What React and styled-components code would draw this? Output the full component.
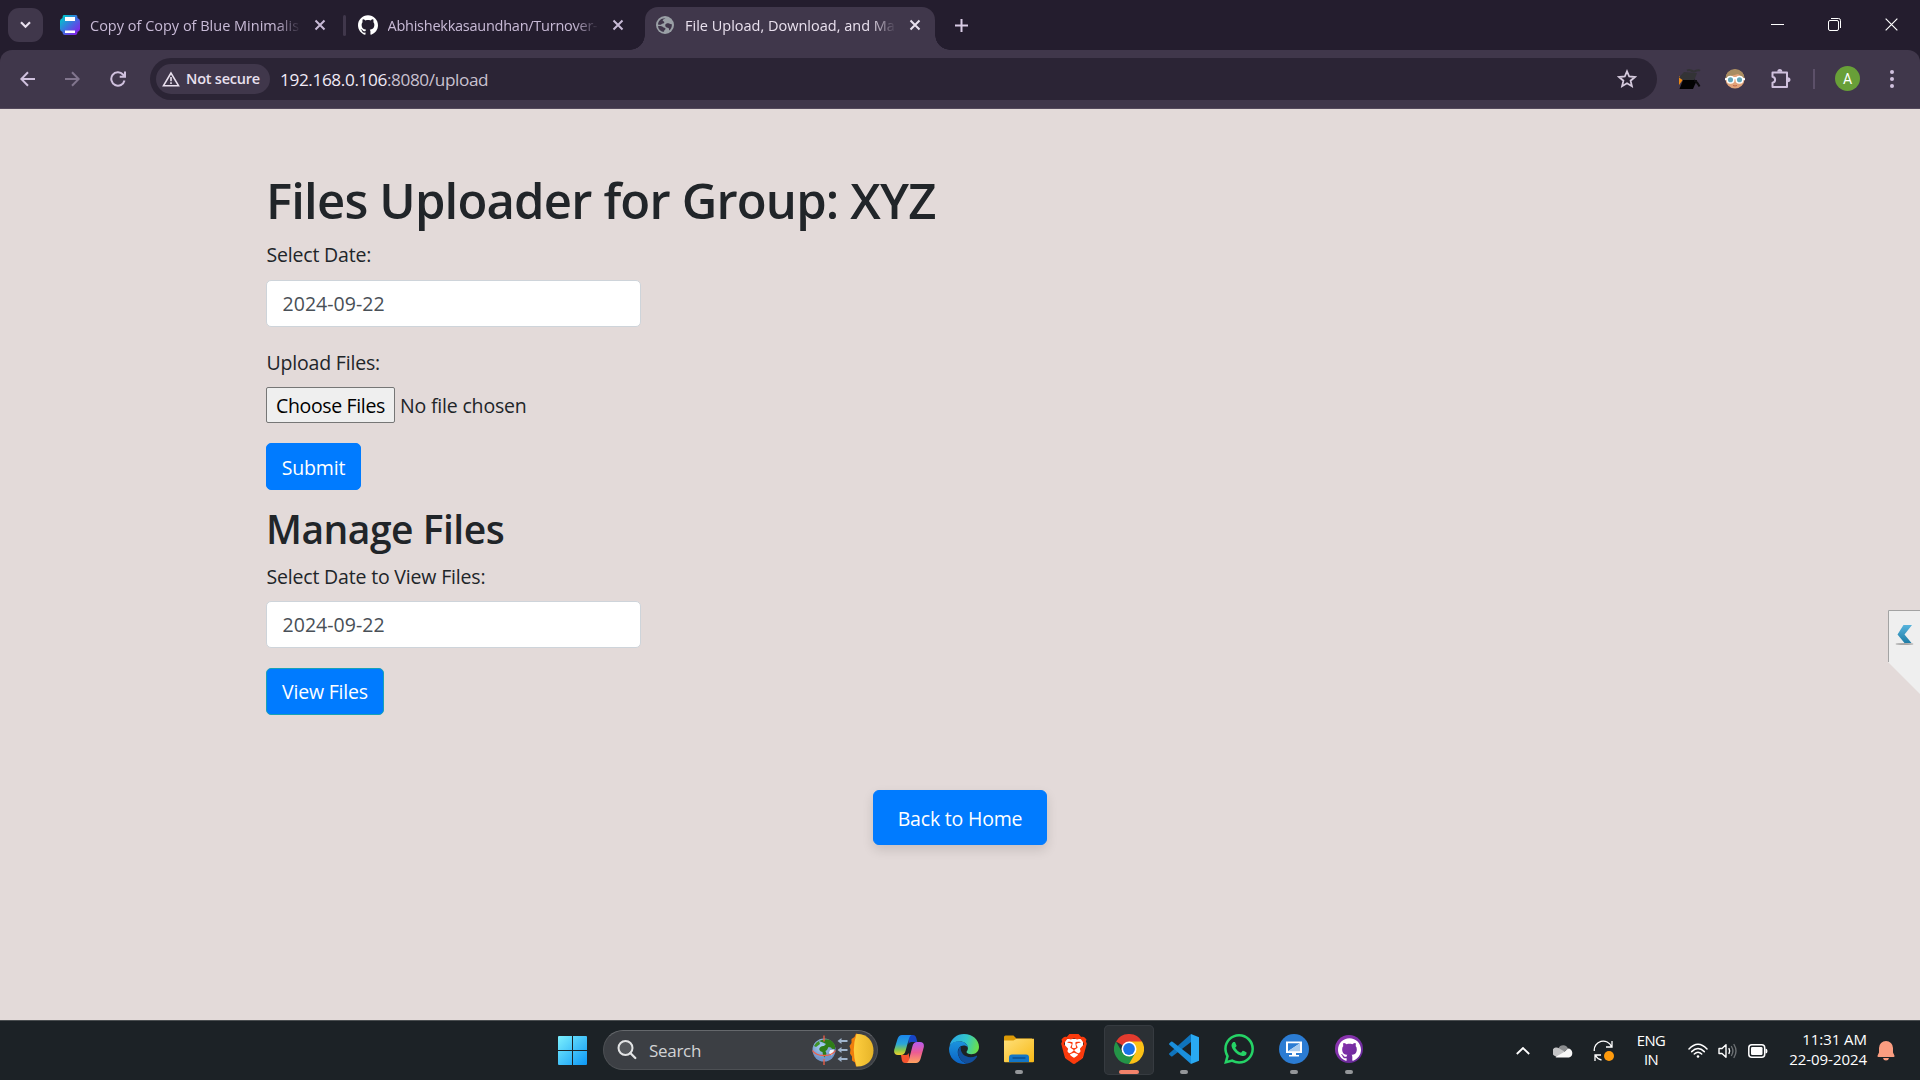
import React from "react";
import styled, { createGlobalStyle } from "styled-components";
import { SiBrave, SiGithub, SiWhatsapp } from "react-icons/si";

const GlobalStyle = createGlobalStyle`
  *, *::before, *::after { box-sizing: border-box; }
  body { margin: 0; overflow: hidden; font-family: "Open Sans", "Noto Sans", sans-serif; }
  button, input { font-family: inherit; }
  svg { display: block; flex: none; }
`;

const Screen = styled.div`
  display: flex;
  flex-direction: column;
  width: 1920px;
  height: 1080px;
  overflow: hidden;
  background: #241d2e;
`;

/* ---------- tab strip ---------- */
const TabStrip = styled.div`
  display: flex;
  align-items: flex-start;
  height: 50px;
  background: #241d2e;
`;
const TabSearch = styled.button`
  display: grid;
  place-items: center;
  width: 35px;
  height: 34px;
  margin: 8px 17px 0 8px;
  padding: 0;
  border: 0;
  border-radius: 11px;
  background: #40374b;
`;
const Tab = styled.div`
  position: relative;
  display: flex;
  align-items: center;
  width: ${(p) => p.$width}px;
  height: 43px;
  margin-top: 7px;
  padding-left: ${(p) => (p.$active ? 11 : 0)}px;
  border-radius: 13px 13px 0 0;
  background: ${(p) => (p.$active ? "#40374b" : "transparent")};
  color: ${(p) => (p.$active ? "#e9e0ee" : "#c8bad6")};
  &::before, &::after {
    content: "";
    display: ${(p) => (p.$active ? "block" : "none")};
    position: absolute;
    bottom: 0;
    width: 15px;
    height: 15px;
  }
  &::before { left: -15px; background: radial-gradient(circle at 0 0, transparent 14.5px, #40374b 15px); }
  &::after { right: -15px; background: radial-gradient(circle at 100% 0, transparent 14.5px, #40374b 15px); }
`;
const Favicon = styled.span`
  display: grid;
  place-items: center start;
  width: ${(p) => p.$width}px;
  margin-top: -7px;
  color: #fff;
`;
const TabTitle = styled.span`
  width: 211px;
  margin-top: -5px;
  overflow: hidden;
  white-space: nowrap;
  font-size: 14.5px;
  line-height: 26px;
  letter-spacing: ${(p) => p.$spacing || 0}px;
  mask-image: linear-gradient(90deg, #000 186px, transparent 211px);
`;
const TabClose = styled.button`
  display: grid;
  place-items: center;
  width: 20px;
  height: 20px;
  margin: -7px 0 0 ${(p) => p.$gap}px;
  padding: 0;
  border: 0;
  background: none;
  color: inherit;
`;
const TabDivider = styled.span`
  width: 3px;
  height: 21px;
  margin: 15px 12px 0 0;
  border-radius: 2px;
  background: #40374b;
`;
const NewTab = styled.button`
  display: grid;
  place-items: center;
  width: 36px;
  height: 36px;
  margin: 7px auto 0 8px;
  padding: 0;
  border: 0;
  background: none;
`;
const WindowControls = styled.div`
  display: flex;
  height: 50px;
`;
const WindowButton = styled.button`
  display: grid;
  place-items: center;
  width: 57px;
  height: 49px;
  padding: 0;
  border: 0;
  background: none;
`;

/* ---------- toolbar ---------- */
const Toolbar = styled.div`
  display: flex;
  align-items: center;
  height: 59px;
  padding: 0 10px 1px;
  border-bottom: 1px solid #54495c;
  border-radius: 12px 12px 0 0;
  background: #40374b;
`;
const ToolButton = styled.button`
  display: grid;
  place-items: center;
  width: ${(p) => p.$width || 36}px;
  height: 36px;
  margin-right: ${(p) => p.$gap || 0}px;
  padding: 0;
  border: 0;
  background: none;
  opacity: ${(p) => (p.$dim ? 0.45 : 1)};
`;
const Omnibox = styled.div`
  display: flex;
  align-items: center;
  width: 1507px;
  height: 42px;
  margin-right: 22px;
  padding: 0 12px 0 6px;
  border-radius: 21px;
  background: #2b2435;
`;
const SecurityChip = styled.div`
  display: flex;
  align-items: center;
  gap: 6px;
  width: 114px;
  height: 30px;
  margin-right: 10px;
  padding-left: 6px;
  border-radius: 15px;
  background: #40374b;
  color: #e9e0ee;
  font-size: 14.5px;
  font-weight: 600;
  letter-spacing: -0.22px;
  white-space: nowrap;
`;
const Url = styled.span`
  flex: 1;
  padding-top: 1px;
  color: #c9c1d0;
  font-size: 17.2px;
  letter-spacing: -0.38px;
  b { color: #f1eaf5; font-weight: 400; }
`;
const ToolDivider = styled.span`
  width: 2px;
  height: 20px;
  margin: 0 20px 0 21px;
  background: #5c5069;
`;
const Avatar = styled.span`
  display: grid;
  place-items: center;
  width: 25px;
  height: 25px;
  margin-right: 26px;
  border-radius: 50%;
  background: #689f38;
  color: #fff;
  font: 400 14px Roboto, sans-serif;
`;

/* ---------- web page ---------- */
const Page = styled.main`
  position: relative;
  height: 911px;
  padding: 60.5px 266px 0;
  background: #e3dad9;
  color: #212529;
  font-size: 19.5px;
  line-height: 30px;
  letter-spacing: -0.18px;
`;
const Title = styled.h1`
  margin: 0 0 10px;
  font-size: 49px;
  line-height: 60px;
  font-weight: 600;
  letter-spacing: -0.82px;
`;
const Subtitle = styled.h2`
  margin: 13px 0 9px;
  padding-top: 2px;
  font-size: 39px;
  line-height: 47px;
  font-weight: 600;
  letter-spacing: -0.5px;
`;
const Group = styled.div`
  display: flex;
  flex-direction: column;
  align-items: flex-start;
  gap: 10px;
  margin-bottom: 20px;
`;
const Label = styled.label`
  display: block;
  height: 30px;
  padding: ${(p) => p.$drop || 0}px 0 0 0.5px;
`;
const DateInput = styled.input`
  width: 375px;
  height: ${(p) => p.$height || 47.5}px;
  padding: 0 15px 0 15.5px;
  border: 1px solid #ced4da;
  border-radius: 5px;
  background: #fff;
  color: #495057;
  font-size: 19.5px;
  letter-spacing: 0.04px;
  outline: 0;
`;
const FilePicker = styled.div`
  display: flex;
  align-items: center;
  gap: 5px;
  height: 36px;
  span { padding-top: 2px; }
`;
const ChooseButton = styled.button`
  width: 129px;
  height: 36px;
  padding: 1px 0 0;
  border: 1px solid #767676;
  border-radius: 2px;
  background: #efefef;
  color: #000;
  font-size: 19.5px;
  letter-spacing: -0.35px;
`;
const Button = styled.button`
  display: block;
  width: ${(p) => p.$width}px;
  height: 47px;
  padding: 1px 0 0;
  border: 1px solid ${(p) => p.$edge || "#007bff"};
  border-radius: 5px;
  background: #007bff;
  color: #fff;
  font-size: 19.5px;
  letter-spacing: -0.2px;
`;
const HomeRow = styled.div`
  display: flex;
  justify-content: center;
  margin-top: 75px;
`;
const HomeButton = styled(Button)`
  height: 55px;
  padding-top: 2px;
  border-radius: 6px;
  box-shadow: 0 5px 12px rgba(0, 0, 0, 0.12);
`;
const SideHandle = styled.div`
  position: absolute;
  top: 501px;
  right: 0;
`;

/* ---------- taskbar ---------- */
const Taskbar = styled.footer`
  display: flex;
  align-items: center;
  height: 60px;
  padding-left: 558px;
  border-top: 1px solid #4a4e50;
  background: #1c2226;
  color: #fff;
`;
const SearchBox = styled.div`
  display: flex;
  align-items: center;
  width: 275px;
  height: 40px;
  margin: -1px 6px 0 16px;
  padding: 0 3px 0 14px;
  border: 1px solid #4d5054;
  border-top-color: #65686c;
  border-radius: 20px;
  background: #3c3f44;
  color: #d2d3d5;
  font-size: 17px;
  letter-spacing: -0.3px;
  svg:first-child { margin-left: -1px; }
  span { flex: 1; margin-left: 12px; }
`;
const Apps = styled.div`
  display: flex;
  gap: 5px;
  margin-top: -1px;
`;
const AppTile = styled.div`
  display: grid;
  grid-template-rows: 48px 4px;
  justify-items: center;
  align-items: center;
  width: 50px;
  height: 50px;
  box-shadow: inset 0 0 0 1px ${(p) => (p.$active ? "#363b40" : "transparent")};
  border-radius: 5px;
  background: ${(p) => (p.$active ? "#2b3034" : "transparent")};
`;
const Running = styled.span`
  width: ${(p) => (p.$active ? 20 : 8)}px;
  height: 4px;
  margin-top: -6px;
  border-radius: 2px;
  background: ${(p) => (p.$active ? "#f2836b" : "#94979a")};
`;
const BraveTint = styled.span`
  color: #fb3a0c;
  position: relative;
  svg { position: relative; }
  &::before {
    content: "";
    position: absolute;
    inset: 5px 6px 6px;
    background: #fff;
  }
`;
const GithubDisc = styled.span`
  display: grid;
  place-items: center;
  width: 28px;
  height: 28px;
  border-radius: 50%;
  background: linear-gradient(135deg, #9436b4, #5f2795);
  color: #fff;
`;
const Tray = styled.div`
  display: flex;
  align-items: center;
  flex: 1;
  padding-left: 139px;
  font-size: 15px;
  line-height: 20px;
`;
const TrayIcon = styled.span`
  display: grid;
  place-items: center;
  width: ${(p) => p.$width}px;
  height: 40px;
`;
const Language = styled.div`
  width: 72px;
  margin-top: -1px;
  text-align: center;
  font-size: 14.8px;
  line-height: 19.5px;
  letter-spacing: -0.55px;
`;
const Clock = styled.div`
  width: 98px;
  margin-top: -4px;
  text-align: right;
  letter-spacing: -0.05px;
`;

/* ---------- drawings ---------- */
const stroke = (color, width) => ({ fill: "none", stroke: color, strokeWidth: width });

const Cross = ({ size = 10, color = "currentColor", width = 2 }) => (
  <svg width={size} height={size} viewBox="0 0 10 10" overflow="visible" {...stroke(color, width)}>
    <path d="M.5.5l9 9M9.5.5l-9 9" />
  </svg>
);
const CanvaPrinter = () => (
  <svg width="20" height="20" viewBox="0 0 20 20">
    <defs>
      <linearGradient id="printer" x1="0" y1="0" x2="1" y2="1">
        <stop offset=".1" stopColor="#00c4cc" /><stop offset=".5" stopColor="#3f6fe0" /><stop offset=".85" stopColor="#7d2ae8" />
      </linearGradient>
    </defs>
    <path d="M4 0h12q1.500 0 1.500 3Q20 4 20 6v8q0 2-2.500 3 0 3-2.500 3H5q-2.500 0-2.500-3Q0 16 0 14V6q0-2 2.500-3Q2.500 0 4 0Z" fill="url(#printer)" />
    <path d="M5 2h10v4H5zM5 15.500h10v2.500H5z" fill="#fff" />
  </svg>
);
const Globe = () => (
  <svg width="18" height="18" viewBox="0 0 18 18">
    <circle cx="9" cy="9" r="9" fill="#9aa0a6" />
    <path d="M9.500 2.200c-1 1-2.800.8-2.800 2.400 0 1 1.800.6 1.600 1.900-.2 1.200-2 1-2.800 1.800-1 .8-2.200.6-3.500.3C2 5 5 2 9.500 2.200ZM2 10.200c1.600-.2 4-.2 4.900.8.800 1 2.600.3 2.600 1.800 0 1.300-1.500 1-1.500 3C4.800 15.800 2.300 13.200 2 10.200ZM9.200 9.200c0-1.700 2-2 3.300-1.900 1.200.1 1.300 1 3.400.9.200 3-1 5-2.900 6.300.2-1.700-.1-2.400-1.300-2.700-1.400-.3-2.500-1.200-2.500-2.600Z" fill="#40374b" />
  </svg>
);
const Arrow = ({ flip }) => (
  <svg width="16" height="16" viewBox="0 0 16 16" transform={flip ? "scale(-1 1)" : undefined} {...stroke("#d0c1de", 2)}>
    <path d="M15 8H1.500M8 1.200L1.300 8 8 14.800" />
  </svg>
);
const Reload = () => (
  <svg width="16" height="16" viewBox="0 0 16 16" {...stroke("#d0c1de", 2)}>
    <path d="M14.500 9.500A6.700 6.700 0 1 1 13 3.500L14.500 5M15 .5v5.300H9.700" />
  </svg>
);
const Warning = () => (
  <svg width="18" height="16" viewBox="0 0 18 16" {...stroke("#e9e0ee", 1.6)}>
    <path d="M9 2L1.500 14.700h15zM9 6v4.300M9 11.300v1.600" />
  </svg>
);
const Star = () => (
  <svg width="20" height="20" viewBox="0 0 20 20" {...stroke("#d5cadd", 1.8)}>
    <path d="M10 2.300l2.200 5.200 5.700.5-4.300 3.700 1.300 5.500L10 14.300l-4.900 2.900 1.300-5.500L2.100 8l5.700-.5z" />
  </svg>
);
const GradCap = () => (
  <svg width="22" height="22" viewBox="0 0 22 22">
    <path d="M0 8l4 3.500L0 17z" fill="#f08a12" />
    <path d="M5 4L18 5l-3 8H5L0 9.500z" fill="#333336" />
    <path d="M4 12h14l-4 9H.500z" fill="#020202" />
    <path d="M8 2.500c4-2 5 2 8 .7s4-1.200 5-.4" {...stroke("#333336", 2)} />
    <path d="M15 12.500c3 .5 4 3.500 5.500 6" {...stroke("#0d0c0e", 2)} />
  </svg>
);
const GogglesFace = () => (
  <svg width="20" height="20" viewBox="0 0 20 20">
    <circle cx="10" cy="10" r="9.500" fill="#e3a47a" />
    <path d="M.5 9.500a9.500 9.500 0 0 1 19 0L13 5 6 7z" fill="#a98d62" />
    <path d="M0 9.300q10-2.500 20 0v2q-10-2-20 0z" fill="#fff" />
    <circle cx="5.500" cy="10.800" r="3.300" fill="#63a6b9" stroke="#fff" strokeWidth="1.500" />
    <circle cx="14.500" cy="10.800" r="3.300" fill="#63a6b9" stroke="#fff" strokeWidth="1.500" />
    <path d="M8 16.500q2 1 4 0" {...stroke("#c26548", 1)} />
  </svg>
);
const Puzzle = () => (
  <svg width="22" height="22" viewBox="0 0 22 22">
    <path d="M2.500 4.500h14.500v14.500H2.500v-4.200q2.600-.4 2.600-3T2.500 8.800z" {...stroke("#d0c1de", 2)} strokeLinejoin="round" />
    <path d="M7.300 3.800a2.500 2.800 0 0 1 5 0zM17.700 9.200a2.800 2.500 0 0 1 0 5z" fill="#d0c1de" />
  </svg>
);
const Dots = () => (
  <svg width="4" height="18" viewBox="0 0 4 18" fill="#d0c1de">
    <circle cx="2" cy="2" r="2" /><circle cx="2" cy="9" r="2" /><circle cx="2" cy="16" r="2" />
  </svg>
);
const Handle = () => (
  <svg width="32" height="84" viewBox="0 0 32 84">
    <defs>
      <linearGradient id="chev" x1="0" y1="0" x2="0" y2="1"><stop stopColor="#57b3dc" /><stop offset="1" stopColor="#1f7da6" /></linearGradient>
    </defs>
    <path d="M0 0h32v84L0 52z" fill="#efefef" />
    <path d="M.5 52V.5H32" {...stroke("#a3a3a3", 1)} />
    <path d="M15.500 15H24l-7.500 9.500L23.500 33h-7L9.500 24.500z" fill="url(#chev)" />
    <ellipse cx="16.500" cy="34" rx="9" ry="1" fill="#a8a8a8" />
  </svg>
);
const WindowsLogo = () => (
  <svg width="29" height="29" viewBox="0 0 29 29">
    <defs>
      <linearGradient id="win" x1="0" y1="0" x2="29" y2="29" gradientUnits="userSpaceOnUse"><stop stopColor="#7cf0fd" /><stop offset="1" stopColor="#0c97f5" /></linearGradient>
    </defs>
    <path d="M1 0h13v14H0V1q0-1 1-1zM15 0h13q1 0 1 1v13H15zM0 15h14v14H1q-1 0-1-1zM15 15h14v13q0 1-1 1H15z" fill="url(#win)" />
  </svg>
);
const Lens = () => (
  <svg width="20" height="20" viewBox="0 0 20 20">
    <circle cx="8.500" cy="8" r="7" fill="#55585c" stroke="#e3e4e5" strokeWidth="2" />
    <path d="M13.300 13l5 5" stroke="#e3e4e5" strokeWidth="2.300" strokeLinecap="round" />
  </svg>
);
const Equinox = () => (
  <svg width="64" height="34" viewBox="0 0 64 34">
    <defs>
      <radialGradient id="sea" cx=".4" cy=".35"><stop stopColor="#a9d4f5" /><stop offset="1" stopColor="#7395c9" /></radialGradient>
      <linearGradient id="sun"><stop stopColor="#ffcf3f" /><stop offset="1" stopColor="#e6b429" /></linearGradient>
    </defs>
    <circle cx="14" cy="17" r="11.500" fill="url(#sea)" />
    <path d="M9 8q7-3 12-.5 5 4 4 8.500-3 1-4-1.500l-2.500-.5q-1 3-3 4l1 3-2 3.500q-2-2-2-5.500-4-1-3-4 1.500-2.500 4.500-2l2-2-3-1.500z" fill="#2f7d18" />
    <path d="M4 13q2-4 5-5l1 3-4 3z" fill="#3f9328" />
    <path d="M20 17l4-.5q0 4-2.500 6L19 20z" fill="#f0f6fb" />
    <path d="M2.500 17.500q3 5 11.500 5t11.500-5M14 2.500v6M14 26v6" {...stroke("#ee5f48", 1.300)} />
    <g fill="#9fb4cd">
      <path d="M27.500 8l4-3v2h6v2h-6v2zM27.500 17l4-3v2h6v2h-6v2zM27.500 26l4-3v2h6v2h-6v2z" />
    </g>
    <path d="M46 .5l4 1v31l-4 1-1-4-3-2v-4l-2-3 .500-4L39.500 13l2-3V6l3-2z" fill="#ef7d0c" />
    <path d="M46.500 1C57 .5 63.500 8 63.500 17.500S57 34 46.500 33.500Q41 17 46.500 1z" fill="url(#sun)" />
  </svg>
);
const Copilot = () => (
  <svg width="30" height="28" viewBox="0 0 30 28">
    <defs>
      <linearGradient id="cpA" x1="0" y1="0" x2="0" y2="1"><stop stopColor="#1a86ee" /><stop offset=".45" stopColor="#2ba6d8" /><stop offset=".75" stopColor="#86c84c" /><stop offset="1" stopColor="#f2cf2c" /></linearGradient>
      <linearGradient id="cpB" x1="0" y1="0" x2="0" y2="1"><stop stopColor="#b65af0" /><stop offset=".5" stopColor="#ec5c93" /><stop offset="1" stopColor="#ffa35e" /></linearGradient>
    </defs>
    <path d="M14 0h5q2.500 0 3.300 3l1 4h-6q-2 0-2.700 2z" fill="#1745c4" />
    <path d="M16 28h-5q-2.500 0-3.200-3L7 20h5q2 0 2.700-2z" fill="#f4532e" />
    <path d="M8 0h10q-2 0-3 3.500L11.500 16Q10.500 20 7 20H4Q-.8 20 .3 14.500L3.500 4Q4.800 0 8 0z" fill="url(#cpA)" />
    <path d="M22 28H12q2 0 3-3.500L18.500 11Q19.500 7 23 7h3q4.800 0 3.700 5.500L26.500 24Q25.200 28 22 28z" fill="url(#cpB)" />
  </svg>
);
const Edge = () => (
  <svg width="30" height="30" viewBox="0 0 30 30">
    <defs>
      <linearGradient id="edA" x1="0" y1=".3" x2="1" y2=".5"><stop stopColor="#2aa5e8" /><stop offset=".55" stopColor="#32c6c9" /><stop offset="1" stopColor="#6be04a" /></linearGradient>
      <linearGradient id="edB" x1="0" y1="0" x2="0" y2="1"><stop stopColor="#1b93dd" /><stop offset="1" stopColor="#0b62c4" /></linearGradient>
    </defs>
    <path d="M.5 12C2 4.500 8 0 15 0c8.500 0 15 6 15 12.700 0 4.800-3.500 7.500-7.500 7.500-3.200 0-5-1.200-5-2.200 0-.8 1.400-1.400 1.400-3.800C18.900 10 15 7.500 11 7.500 6 7.500 2 9.500.5 12z" fill="url(#edA)" />
    <path d="M0 15C.3 9.500 5 7.300 10 7.300c5 0 8.700 3 8.900 6.200-1-1.400-2.500-2-4.300-2-4 0-6.600 4-5.600 8.500 1 5 5 9 9.500 9.500C9 32 0 25 0 15z" fill="url(#edB)" />
    <path d="M11.800 12.300C6 17 10 28 18.500 29.600 23.500 28.700 26.500 25.500 28 22.800c.5-.9-.2-1.300-1-.9-8 3.600-16.500-1-15.200-9.600z" fill="#124f9c" />
  </svg>
);
const Folder = () => (
  <svg width="30" height="28" viewBox="0 0 30 28">
    <defs>
      <linearGradient id="fold" x1="0" y1="0" x2="1" y2="1"><stop stopColor="#ffe07a" /><stop offset="1" stopColor="#f7b916" /></linearGradient>
    </defs>
    <path d="M0 2q0-1.500 1.500-1.500h8l3 3H28v5H0z" fill="#dc9a06" />
    <path d="M0 5.500h9.500l3-1.800H30v22.500q0 1-1 1H1q-1 0-1-1z" fill="url(#fold)" />
    <path d="M5 27v-4.500q0-3 3-3h14q3 0 3 3V27z" fill="#1376c6" />
    <path d="M9 23h12" stroke="#0b4f90" strokeWidth="1.300" strokeLinecap="round" />
  </svg>
);
const Chrome = () => (
  <svg width="30" height="30" viewBox="0 0 30 30">
    <path d="M15 15L2 7.500A15 15 0 0 1 28 7.500z" fill="#e33b2e" />
    <path d="M15 15V7.500H28A15 15 0 0 1 15 30z" fill="#fbc116" />
    <path d="M2 7.500L8.500 18.750 15 22.500l6.500-3.750L15 30A15 15 0 0 1 2 7.500z" fill="#249447" />
    <circle cx="15" cy="15" r="7.500" fill="#fff" />
    <circle cx="15" cy="15" r="5.900" fill="#1a73e8" />
  </svg>
);
const VsCode = () => (
  <svg width="30" height="30" viewBox="0 0 30 30">
    <path d="M22 0l8 3.200v23.600L22 30z" fill="#29a9f2" />
    <path d="M22 0v8L3.500 22.300q-.8.600-1.500 0L.4 20.700q-.7-.8 0-1.500z" fill="#0f74bd" />
    <path d="M22 30v-8L3.500 7.700q-.8-.6-1.500 0L.4 9.300q-.7.8 0 1.500z" fill="#1a8fdc" />
  </svg>
);
const RemoteDesktop = () => (
  <svg width="30" height="30" viewBox="0 0 30 30">
    <circle cx="15" cy="15" r="15" fill="#2b7cd3" />
    <path d="M7 7.500h16v11.500H7z" fill="#fff" />
    <path d="M9 9.300h12L9 17.300z" fill="#2b7cd3" />
    <path d="M21 9.300v8H9z" fill="#a8cbee" />
    <path d="M13 19h4v2h3v1.600H10V21h3z" fill="#fff" />
  </svg>
);
const Cloud = () => (
  <svg width="20" height="14" viewBox="0 0 20 14">
    <path d="M5.500 4.500A5 5 0 0 1 15 4.800L9 9z" fill="#8b8d8f" />
    <path d="M1 11.500A4.300 4.300 0 0 1 6 4.200l7 4.300L4 13z" fill="#c3c4c5" />
    <path d="M2.500 13l9-5.200 3.500-3.300A4.600 4.600 0 0 1 16 13.500H4.200q-1 0-1.700-.5z" fill="#f7f7f7" />
  </svg>
);
const Update = () => (
  <svg width="22" height="22" viewBox="0 0 22 22">
    <path d="M1.300 11A9 9 0 0 1 18.500 6.500M19 1v6h-6M8.500 20A9 9 0 0 1 2.500 15.500M8 15H2v6" {...stroke("#fff", 1.300)} />
    <circle cx="16" cy="16" r="5" fill="#ff9b0d" />
  </svg>
);
const Wifi = () => (
  <svg width="20" height="16" viewBox="0 0 20 16" {...stroke("#fff", 1.500)} strokeLinecap="round">
    <path d="M1 6q9-9.500 18 0M3.700 8.600q6.300-6.400 12.600 0M6.300 11q3.700-3.600 7.400 0" />
    <circle cx="10" cy="13.500" r="1.300" fill="#fff" stroke="none" />
  </svg>
);
const Speaker = () => (
  <svg width="20" height="16" viewBox="0 0 20 16" {...stroke("#fff", 1.400)} strokeLinejoin="round" strokeLinecap="round">
    <path d="M1 5.500h3L8 1.800v12.400L4 10.500H1z" />
    <path d="M11 5.500q1.300 2.500 0 5" />
    <path d="M13.500 3.500q2.800 4.500 0 9M16 1.500q4 6.500 0 13" stroke="#6d7174" />
  </svg>
);
const Battery = () => (
  <svg width="20" height="14" viewBox="0 0 20 14">
    <rect x=".8" y=".8" width="15.900" height="12.400" rx="3" {...stroke("#fff", 1.500)} />
    <rect x="3" y="3" width="11.500" height="8" rx="1.200" fill="#fff" />
    <path d="M17.500 4.500q2 0 2 2.500t-2 2.500z" fill="#fff" />
  </svg>
);
const Bell = () => (
  <svg width="18" height="20" viewBox="0 0 18 20" fill="#fa9d80">
    <path d="M9 0a7 7 0 0 1 7 7v4.500l1.500 3.300q.3 1.200-1 1.200h-15q-1.300 0-1-1.200L2 11.500V7a7 7 0 0 1 7-7zM6 17h6q-.5 2.500-3 2.500T6 17z" />
  </svg>
);

const apps = [
  { id: "copilot", icon: <Copilot /> },
  { id: "edge", icon: <Edge /> },
  { id: "files", icon: <Folder />, running: true },
  { id: "brave", icon: <BraveTint><SiBrave size={30} /></BraveTint> },
  { id: "chrome", icon: <Chrome />, running: true, active: true },
  { id: "code", icon: <VsCode />, running: true },
  { id: "whatsapp", icon: <SiWhatsapp size={30} color="#25d366" /> },
  { id: "remote", icon: <RemoteDesktop />, running: true },
  { id: "github", icon: <GithubDisc><SiGithub size={23} /></GithubDisc>, running: true },
];

export default function App() {
  return (
    <Screen>
      <GlobalStyle />
      <TabStrip>
        <TabSearch>
          <svg width="11" height="8" viewBox="0 0 11 8" {...stroke("#e9e0ee", 2.2)}><path d="M1 1.300l4.500 4.500L10 1.300" /></svg>
        </TabSearch>
        <Tab $width={283}>
          <Favicon $width={30}><CanvaPrinter /></Favicon>
          <TabTitle>Copy of Copy of Blue Minimalis</TabTitle>
          <TabClose $gap={9}><Cross /></TabClose>
        </Tab>
        <TabDivider />
        <Tab $width={287}>
          <Favicon $width={29.5}><SiGithub size={20} /></Favicon>
          <TabTitle $spacing={-0.25}>Abhishekkasaundhan/Turnover-</TabTitle>
          <TabClose $gap={9}><Cross /></TabClose>
        </Tab>
        <Tab $width={290} $active>
          <Favicon $width={29}><Globe /></Favicon>
          <TabTitle>File Upload, Download, and Ma</TabTitle>
          <TabClose $gap={9}><Cross /></TabClose>
        </Tab>
        <NewTab>
          <svg width="13" height="13" viewBox="0 0 13 13" {...stroke("#d9cce5", 2)}><path d="M6.500 0v13M0 6.500h13" /></svg>
        </NewTab>
        <WindowControls>
          <WindowButton><svg width="13" height="13" viewBox="0 0 13 13" {...stroke("#fff", 1)}><path d="M0 6.500h13" /></svg></WindowButton>
          <WindowButton>
            <svg width="13" height="13" viewBox="0 0 13 13" {...stroke("#fff", 1)}>
              <rect x=".5" y="2.500" width="10" height="10" rx="1.500" />
              <path d="M3 .5h7.500q2 0 2 2V10" />
            </svg>
          </WindowButton>
          <WindowButton><Cross size={13} color="#fff" width={0.9} /></WindowButton>
        </WindowControls>
      </TabStrip>

      <Toolbar>
        <ToolButton $gap={8}><Arrow /></ToolButton>
        <ToolButton $gap={10} $dim><Arrow flip /></ToolButton>
        <ToolButton $gap={14}><Reload /></ToolButton>
        <Omnibox>
          <SecurityChip><Warning />Not secure</SecurityChip>
          <Url><b>192.168.0.106</b>:8080/upload</Url>
          <ToolButton><Star /></ToolButton>
        </Omnibox>
        <ToolButton $width={22} $gap={24}><GradCap /></ToolButton>
        <ToolButton $width={20} $gap={25}><GogglesFace /></ToolButton>
        <ToolButton $width={22}><Puzzle /></ToolButton>
        <ToolDivider />
        <Avatar>A</Avatar>
        <ToolButton $width={12}><Dots /></ToolButton>
      </Toolbar>

      <Page>
        <Title>Files Uploader for Group: XYZ</Title>
        <Group>
          <Label>Select Date:</Label>
          <DateInput defaultValue="2024-09-22" />
        </Group>
        <Group>
          <Label $drop={1}>Upload Files:</Label>
          <FilePicker>
            <ChooseButton>Choose Files</ChooseButton>
            <span>No file chosen</span>
          </FilePicker>
        </Group>
        <Button $width={95}>Submit</Button>
        <Subtitle>Manage Files</Subtitle>
        <Group>
          <Label $drop={1}>Select Date to View Files:</Label>
          <DateInput $height={46.5} defaultValue="2024-09-22" />
        </Group>
        <Button $width={118} $edge="#17a2b8">View Files</Button>
        <HomeRow><HomeButton $width={174}>Back to Home</HomeButton></HomeRow>
        <SideHandle><Handle /></SideHandle>
      </Page>

      <Taskbar>
        <WindowsLogo />
        <SearchBox>
          <Lens />
          <span>Search</span>
          <Equinox />
        </SearchBox>
        <Apps>
          {apps.map((app) => (
            <AppTile key={app.id} $active={app.active}>
              {app.icon}
              {app.running && <Running $active={app.active} />}
            </AppTile>
          ))}
        </Apps>
        <Tray>
          <TrayIcon $width={20}>
            <svg width="14" height="8" viewBox="0 0 14 8" {...stroke("#fff", 1.800)}><path d="M.8 7L7 1l6.200 6" /></svg>
          </TrayIcon>
          <TrayIcon $width={60}><Cloud /></TrayIcon>
          <TrayIcon $width={22}><Update /></TrayIcon>
          <Language>ENG<br />IN</Language>
          <TrayIcon $width={22}><Wifi /></TrayIcon>
          <TrayIcon $width={38}><Speaker /></TrayIcon>
          <TrayIcon $width={22}><Battery /></TrayIcon>
          <Clock>11:31 AM<br />22-09-2024</Clock>
          <TrayIcon $width={38}><Bell /></TrayIcon>
        </Tray>
      </Taskbar>
    </Screen>
  );
}
